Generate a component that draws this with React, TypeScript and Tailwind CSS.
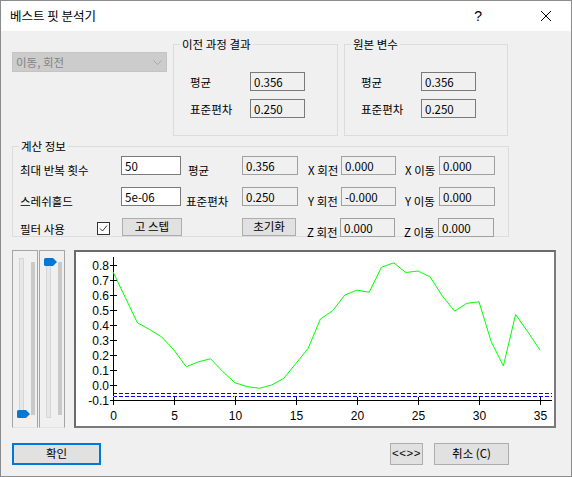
import React from "react";

/* ─────────── chart data ─────────── */
const SERIES = [
  0.755, 0.585, 0.415, 0.37, 0.32, 0.233, 0.122, 0.155, 0.175, 0.089, 0.015, -0.011, -0.022, 0.0, 0.045, 0.145,
  0.245, 0.44, 0.495, 0.6, 0.633, 0.618, 0.785, 0.815, 0.75, 0.76, 0.72, 0.593, 0.493, 0.545, 0.555, 0.289,
  0.127, 0.47, 0.355, 0.233,
];

const px = (t: number) => 113 + 12.2 * t;
const py = (v: number) => 385 - v * 150;

const Y_TICKS = [0.8, 0.7, 0.6, 0.5, 0.4, 0.3, 0.2, 0.1, 0.0, -0.1];
const X_TICKS = [0, 5, 10, 15, 20, 25, 30, 35];

export default function App() {
  return (
    <div className="w-[572px] h-[477px] border border-[#8c8c8c] bg-[#f0f0f0] font-['Noto_Sans_CJK_KR',sans-serif] text-[11.5px] leading-[16px] text-black overflow-hidden">
      {/* Title bar */}
      <div className="h-[30px] bg-white flex items-center">
        <span className="ml-[9px] text-[12.5px]">베스트 핏 분석기</span>
        <span className="ml-auto mr-[58px] text-[14px] font-['Liberation_Sans',sans-serif]">?</span>
        <svg width="12" height="12" viewBox="0 0 12 12" className="mr-[19px]">
          <path d="M1 1 L11 11 M11 1 L1 11" stroke="#000" strokeWidth="1" />
        </svg>
      </div>

      {/* Top row */}
      <div className="flex items-start mt-[5px] pl-[11px]">
        <div className="mt-[16px] w-[155px] h-[20px] bg-[#cccccc] border border-[#c4c4c4] flex items-center pl-[3px] text-[#838383]">
          <span>이동, 회전</span>
          <svg width="9" height="5" viewBox="0 0 9 5" className="ml-auto mr-[4px]">
            <path d="M0.5 0.5 L4.5 4.5 L8.5 0.5" fill="none" stroke="#a8a8a8" strokeWidth="1" />
          </svg>
        </div>
        <StatGroup title="이전 과정 결과" className="ml-[6px] w-[165px]" />
        <StatGroup title="원본 변수" className="ml-[6px] w-[164px]" />
      </div>

      {/* Calc info */}
      <fieldset className="ml-[11px] mt-[2px] w-[497px] h-[99px] border border-[#dcdcdc]">
        <legend className="ml-[6px] px-[2px]">계산 정보</legend>
        <div className="flex items-start mt-[2px] pl-[7px]">
          <Label w="w-[101px]">최대 반복 횟수</Label>
          <Box w="w-[60px]" white>50</Box>
          <Label w="w-[54px]" className="ml-[7px]">평균</Label>
          <Box w="w-[56px]">0.356</Box>
          <Label w="w-[33px]" className="ml-[10px]">X 회전</Label>
          <Box w="w-[55px]">0.000</Box>
          <Label w="w-[34px]" className="ml-[9px]">X 이동</Label>
          <Box w="w-[56px]">0.000</Box>
        </div>
        <div className="flex items-start mt-[9px] pl-[7px]">
          <Label w="w-[101px]">스레쉬홀드</Label>
          <Box w="w-[60px]" white>5e-06</Box>
          <Label w="w-[54px]" className="ml-[5px]">표준편차</Label>
          <Box w="w-[56px]" className="ml-[2px]">0.250</Box>
          <Label w="w-[33px]" className="ml-[10px]">Y 회전</Label>
          <Box w="w-[55px]">-0.000</Box>
          <Label w="w-[34px]" className="ml-[9px]">Y 이동</Label>
          <Box w="w-[56px]">0.000</Box>
        </div>
        <div className="flex items-start mt-[9px] pl-[7px]">
          <span className="w-[77px] pt-[3px] whitespace-nowrap">필터 사용</span>
          <svg width="13" height="13" viewBox="0 0 13 13" className="mt-[4px]">
            <rect x="0.5" y="0.5" width="12" height="12" fill="#fff" stroke="#333" />
            <path d="M3 6.5 L5.5 9 L10 3.5" fill="none" stroke="#333" strokeWidth="1" />
          </svg>
          <Btn className="ml-[12px] w-[60px] h-[18px]">고 스텝</Btn>
          <Btn className="ml-[60px] w-[54px] h-[18px]">초기화</Btn>
          <Label w="w-[33px]" className="ml-[11px]">Z 회전</Label>
          <Box w="w-[55px]">0.000</Box>
          <Label w="w-[34px]" className="ml-[9px]">Z 이동</Label>
          <Box w="w-[56px]">0.000</Box>
        </div>
      </fieldset>

      {/* Sliders + chart */}
      <div className="flex mt-[13px] pl-[11px]">
        <Slider thumbTop={false} />
        <Slider thumbTop className="ml-[1px]" />
        <div className="ml-[9px] w-[482px] h-[178px] border-2 border-[#7a7a7a] border-l-[#6b6b6b] border-t-[#6b6b6b] bg-white">
          <Chart />
        </div>
      </div>

      {/* Buttons */}
      <div className="flex mt-[15px] pl-[11px] pr-[62px]">
        <Btn primary className="w-[89px] h-[22px]">확인</Btn>
        <Btn className="ml-auto w-[33px] h-[22px] font-['Liberation_Sans',sans-serif] tracking-[0.5px]">&lt;&lt;&gt;&gt;</Btn>
        <Btn className="ml-[11px] w-[75px] h-[22px]">취소 (C)</Btn>
      </div>
    </div>
  );
}

/* ─── Sub-components ─── */

function StatGroup({ title, className }: { title: string; className: string }) {
  return (
    <fieldset className={`h-[100px] border border-[#dcdcdc] ${className}`}>
      <legend className="ml-[6px] px-[2px]">{title}</legend>
      <div className="mt-[20px] pl-[16px] flex items-center">
        <span className="w-[60px]">평균</span>
        <Box w="w-[55px]" dark>0.356</Box>
      </div>
      <div className="mt-[8px] pl-[16px] flex items-center">
        <span className="w-[60px]">표준편차</span>
        <Box w="w-[55px]" dark>0.250</Box>
      </div>
    </fieldset>
  );
}

function Label({ children, w, className = "" }: { children: React.ReactNode; w: string; className?: string }) {
  return <span className={`${w} pt-[6px] whitespace-nowrap ${className}`}>{children}</span>;
}

function Box({
  children,
  w,
  white,
  dark,
  className = "",
}: {
  children: React.ReactNode;
  w: string;
  white?: boolean;
  dark?: boolean;
  className?: string;
}) {
  const tone = white ? "bg-white border-[#7a7a7a]" : dark ? "bg-[#f0f0f0] border-[#7a7a7a]" : "bg-[#f0f0f0] border-[#a0a0a0]";
  return <div className={`${w} h-[19px] border flex items-center pl-[3px] ${tone} ${className}`}>{children}</div>;
}

function Btn({ children, primary, className = "" }: { children: React.ReactNode; primary?: boolean; className?: string }) {
  return (
    <button
      className={`bg-[#e1e1e1] flex items-center justify-center leading-none ${
        primary ? "border-2 border-[#0078d7]" : "border border-[#adadad]"
      } ${className}`}
    >
      {children}
    </button>
  );
}

function Slider({ thumbTop, className = "" }: { thumbTop: boolean; className?: string }) {
  return (
    <div className={`relative w-[26px] h-[178px] border border-[#a5a5a5] border-b-[#e3e3e3] flex pl-[6px] ${className}`}>
      <div className="mt-[7px] w-[5px] h-[160px] bg-[#e7e7e7] border border-[#d6d6d6]" />
      <div className="mt-[11px] ml-[7px] w-[4px] h-[153px] bg-[#c9c9c9]" />
      <svg
        width="13"
        height="8"
        viewBox="0 0 13 8"
        className={`absolute left-[4px] ${thumbTop ? "top-[7px]" : "top-[159px]"}`}
      >
        <path d="M1.5 0 H9 L13 4 L9 8 H1.5 Q0 8 0 6.5 V1.5 Q0 0 1.5 0 Z" fill="#0078d7" />
      </svg>
    </div>
  );
}

function Chart() {
  const points = SERIES.map((v, t) => `${px(t).toFixed(1)},${py(v).toFixed(1)}`).join(" ");
  return (
    <svg width="478" height="174" viewBox="76 252 478 174" className="block">
      {/* blue dashed limits */}
      <line x1="113" y1="393.5" x2="552" y2="393.5" stroke="#0000ff" strokeDasharray="4 2" />
      <line x1="113" y1="396.5" x2="552" y2="396.5" stroke="#0000ff" strokeDasharray="4 2" />

      {/* axes */}
      <line x1="113.5" y1="257" x2="113.5" y2="401" stroke="#000" />
      <line x1="113" y1="400.5" x2="552" y2="400.5" stroke="#000" />

      {Y_TICKS.map((v) => (
        <g key={v}>
          <line x1="110" y1={py(v) + 0.5} x2="117" y2={py(v) + 0.5} stroke="#000" />
          <text
            x="109"
            y={py(v) + 4.5}
            textAnchor="end"
            fontFamily="Liberation Sans, Arial, sans-serif"
            fontSize="12"
            fill="#000"
          >
            {v.toFixed(1)}
          </text>
        </g>
      ))}

      {X_TICKS.map((t) => (
        <g key={t}>
          <line x1={Math.round(px(t)) + 0.5} y1="397" x2={Math.round(px(t)) + 0.5} y2="405" stroke="#000" />
          <text
            x={px(t) + 0.5}
            y="420"
            textAnchor="middle"
            fontFamily="Liberation Sans, Arial, sans-serif"
            fontSize="12"
            fill="#000"
          >
            {t}
          </text>
        </g>
      ))}

      {/* tiny yellow markers */}
      <rect x="113" y="396" width="1" height="1" fill="#e8e800" />
      <rect x="234" y="396" width="1" height="1" fill="#e8e800" />
      <rect x="478" y="396" width="1" height="1" fill="#e8e800" />

      <polyline points={points} fill="none" stroke="#00ff00" strokeWidth="1" />
    </svg>
  );
}
